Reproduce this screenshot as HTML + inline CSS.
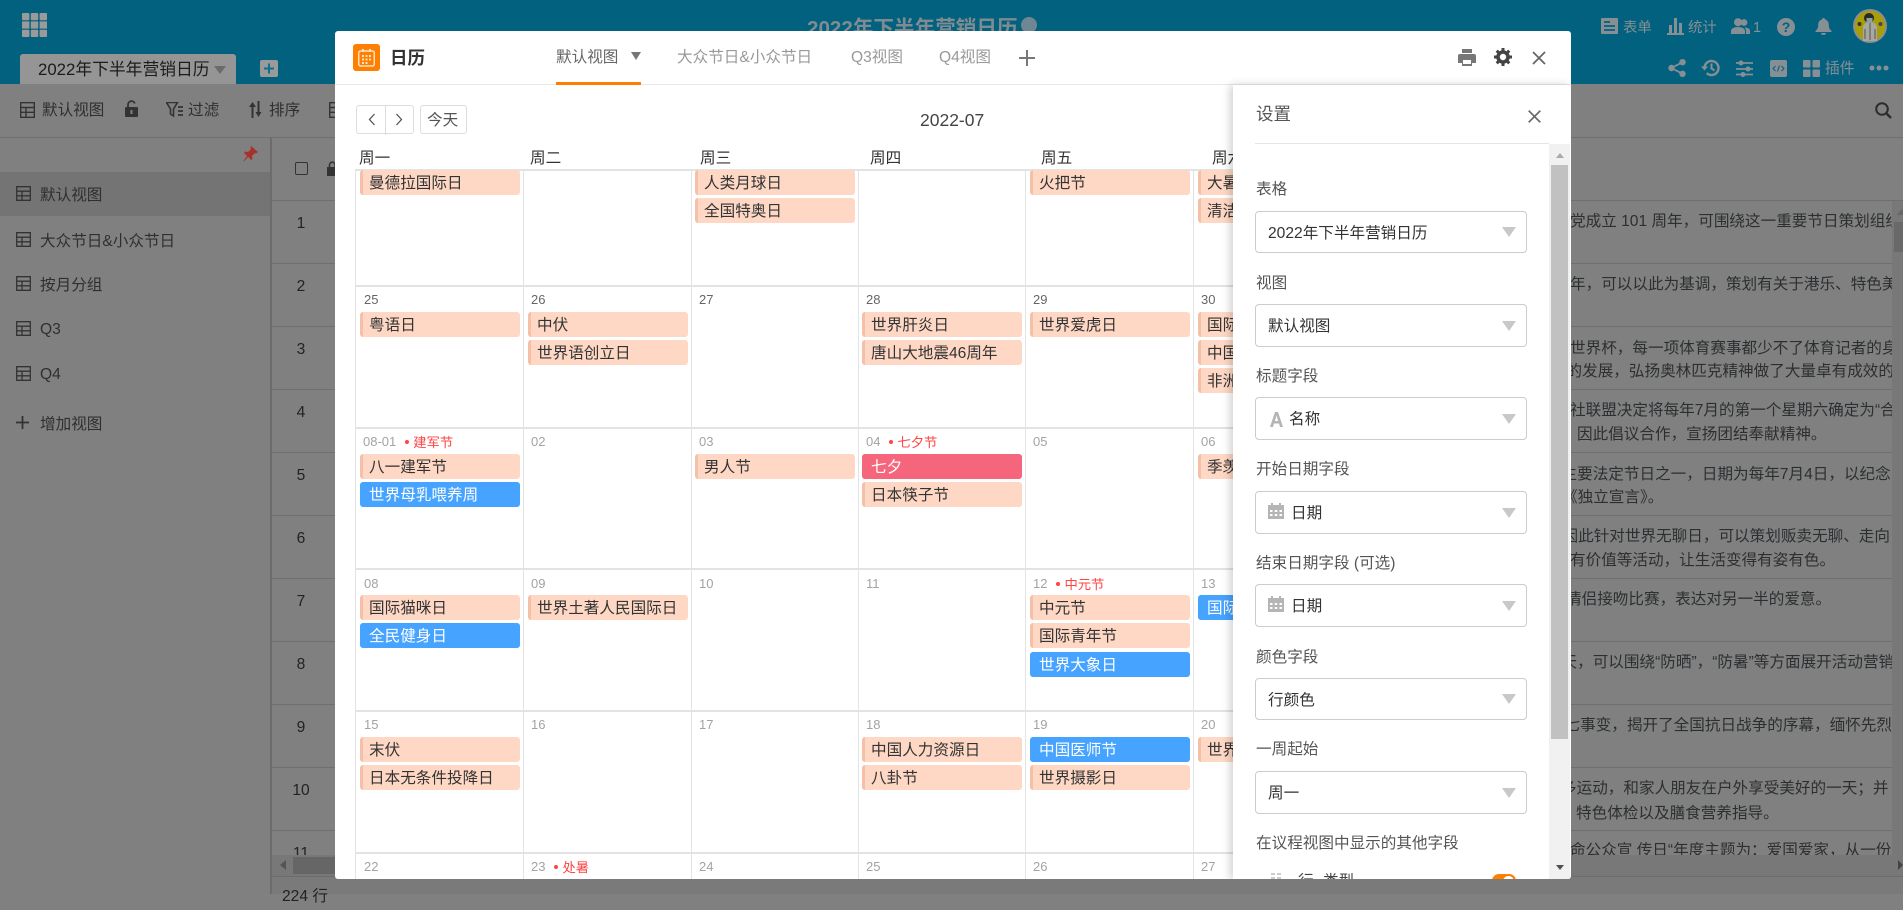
<!DOCTYPE html>
<html lang="zh"><head><meta charset="utf-8"><title>日历</title>
<style>
*{box-sizing:border-box}
html,body{margin:0;padding:0;width:1903px;height:894px;overflow:hidden;background:#808080;font-family:"Liberation Sans","Noto Sans CJK SC",sans-serif;font-size:15.6px;color:#333}
div,span,svg{position:absolute}
.t{white-space:nowrap;height:22px;line-height:26px}
.hl{height:1px;background:#6f6f6f}
.vl{width:1px;background:#e3e3e3;top:169px;height:710px}
.gh{height:2px;background:#e3e3e3;left:356px;width:880px}
.s{color:#2f2f2f}
.ti{color:#858f94;font-size:14.4px}
.n{color:#222;width:40px;text-align:center;left:281px}
.l{left:1571px;color:#2c2f31}
.e{width:160px;height:25px;line-height:28px;background:#fed8c4;border-left:3px solid #f5c0a8;border-radius:3px;padding-left:6px;color:#333;white-space:nowrap;overflow:hidden}
.b{background:#46a3ff;border-left-color:#46a3ff;color:#fff}
.r{background:#f5667c;border-left-color:#f5667c;color:#fff}
.d{font-size:13px;height:18px;line-height:20px;color:#a3a3a3;white-space:nowrap}
.d b{font-weight:normal}
.dk{color:#666}
.f{position:relative;top:1px;color:#f44;font-size:13.3px}
.f i{display:inline-block;width:4px;height:4px;border-radius:50%;background:#f44;margin:0 4px 3px 9px}
.wk{color:#333;top:146px}
.lb{left:1256px;color:#555}
.sel{left:1255px;width:272px;border:1px solid #ccc;border-radius:4px;background:#fff}
.sel .a{position:absolute;right:10px;top:50%;margin-top:-5px;width:0;height:0;border-left:7px solid transparent;border-right:7px solid transparent;border-top:10px solid #c8c8c8}
.sel .t{left:12px;top:9px;color:#333}
</style></head><body>

<!-- top app bar -->
<div style="left:0;top:0;width:1903px;height:84px;background:#02617f"></div>
<svg style="left:22px;top:13px" width="25" height="24" viewBox="0 0 25 24"><g fill="#9a9a9a"><rect x="0" y="0" width="7.4" height="7.2" rx="1"/><rect x="8.8" y="0" width="7.4" height="7.2" rx="1"/><rect x="17.6" y="0" width="7.4" height="7.2" rx="1"/><rect x="0" y="8.4" width="7.4" height="7.2"/><rect x="8.8" y="8.4" width="7.4" height="7.2"/><rect x="17.6" y="8.4" width="7.4" height="7.2"/><rect x="0" y="16.8" width="7.4" height="7.2" rx="1"/><rect x="8.8" y="16.8" width="7.4" height="7.2" rx="1"/><rect x="17.6" y="16.8" width="7.4" height="7.2" rx="1"/></g></svg>
<div style="left:20px;top:54px;width:216px;height:30px;background:#959595;border-radius:3px 3px 0 0"></div>
<div class="t" style="left:38px;top:57px;font-size:16.8px;color:#1c1c1c">2022年下半年营销日历</div>
<div style="left:214px;top:66px;width:0;height:0;border-left:6px solid transparent;border-right:6px solid transparent;border-top:8px solid #6b6b6b"></div>
<div style="left:260px;top:60px;width:18px;height:17px;background:#9a9a9a;border-radius:2px"></div>
<svg style="left:260px;top:60px" width="18" height="17"><path d="M9 3.500v10M4 8.500h10" stroke="#0f6f8f" stroke-width="2"/></svg>
<div class="t" style="left:807px;top:16px;font-size:20.6px;font-weight:bold;height:26px;line-height:26px;color:#7e8b91">2022年下半年营销日历</div>
<div style="left:1021px;top:17px;width:16px;height:16px;border-radius:50%;background:#6f8792"></div>

<!-- top-right icons -->
<svg style="left:1601px;top:18px" width="17" height="16" viewBox="0 0 17 16"><path d="M1 0h15a1 1 0 0 1 1 1v14a1 1 0 0 1-1 1H1a1 1 0 0 1-1-1V1a1 1 0 0 1 1-1z" fill="#858f94"/><path d="M3 4h6M3 8h11M3 12h11" stroke="#02617f" stroke-width="1.8"/></svg>
<div class="t ti" style="left:1623px;top:15px">表单</div>
<svg style="left:1667px;top:18px" width="17" height="17" viewBox="0 0 17 17"><path d="M0 15h17v2H0zM2 7h3v8H2zM7 0h3v15H7zM12 5h3v10h-3z" fill="#858f94"/></svg>
<div class="t ti" style="left:1688px;top:15px">统计</div>
<svg style="left:1731px;top:18px" width="19" height="16" viewBox="0 0 19 16"><circle cx="7" cy="4.2" r="4" fill="#858f94"/><circle cx="13" cy="4.5" r="3.4" fill="#858f94"/><path d="M0 16v-3c0-2.500 3-4 7-4s7 1.500 7 4v3z" fill="#858f94"/><path d="M15 16v-3.500c0-1.200-.5-2-1.500-3 3 0 5.500 1 5.500 3.500v3z" fill="#858f94"/></svg>
<div class="t ti" style="left:1753px;top:15px">1</div>
<svg style="left:1777px;top:18px" width="18" height="18" viewBox="0 0 18 18"><circle cx="9" cy="9" r="9" fill="#858f94"/><text x="9" y="14" text-anchor="middle" font-size="14" font-weight="bold" font-family="Liberation Sans" fill="#02617f">?</text></svg>
<svg style="left:1815px;top:18px" width="17" height="17" viewBox="0 0 17 17"><path d="M8.500 0c1 0 1.500.6 1.500 1.400 2.500.7 3.800 2.800 3.800 5.600 0 3 1 4.500 2.700 6v1H.5v-1c1.700-1.500 2.700-3 2.700-6 0-2.800 1.300-4.900 3.800-5.600C7 .6 7.500 0 8.500 0z" fill="#858f94"/><path d="M6 15h5c0 1.200-1 2-2.500 2S6 16.200 6 15z" fill="#858f94"/></svg>
<svg style="left:1853px;top:9px" width="34" height="34" viewBox="0 0 34 34"><circle cx="17" cy="17" r="17" fill="#8d8d8d"/><circle cx="17" cy="17" r="15" fill="#a89e08"/><path d="M10 32V18c0-3 4-5 7-5s7 2 7 5v14z" fill="#a8a8a0"/><circle cx="16" cy="9" r="5" fill="#2a2a2a"/><rect x="13.500" y="9" width="6" height="5" fill="#8fa1a1"/><circle cx="6.500" cy="15" r="2" fill="#333"/><circle cx="27.500" cy="15" r="2" fill="#445"/><path d="M17 14v17" stroke="#555"/><path d="M12 20v10M22 20v10" stroke="#555"/></svg>

<svg style="left:1668px;top:59px" width="18" height="18" viewBox="0 0 18 18"><g fill="#858f94"><circle cx="14.500" cy="3.200" r="3.200"/><circle cx="14.500" cy="14.800" r="3.200"/><circle cx="3.500" cy="9" r="3.200"/></g><path d="M14.500 3.200L3.500 9l11 5.800" stroke="#858f94" stroke-width="1.800" fill="none"/></svg>
<svg style="left:1701px;top:59px" width="19" height="18" viewBox="0 0 19 18"><path d="M3.500 9a7 7 0 1 1 2.200 5.100" fill="none" stroke="#858f94" stroke-width="2.400"/><path d="M0 7.500h7l-3.500 4z" fill="#858f94"/><path d="M10.500 4.500V9.500l3 2" fill="none" stroke="#858f94" stroke-width="2"/></svg>
<svg style="left:1736px;top:60px" width="17" height="17" viewBox="0 0 17 17"><path d="M0 3h17M0 9h17M0 14.500h17" stroke="#858f94" stroke-width="1.800"/><circle cx="5" cy="3" r="2.500" fill="#858f94"/><circle cx="12" cy="9" r="2.500" fill="#858f94"/><circle cx="7" cy="14.500" r="2.500" fill="#858f94"/></svg>
<div style="left:1770px;top:60px;width:17px;height:17px;border-radius:2px;background:#858f94"></div>
<svg style="left:1770px;top:60px" width="17" height="17" viewBox="0 0 17 17"><path d="M5.500 6L3 8.500 5.500 11M11.500 6L14 8.500 11.500 11M9.500 5.500L7.500 11.500" fill="none" stroke="#02617f" stroke-width="1"/></svg>
<svg style="left:1803px;top:60px" width="17" height="17" viewBox="0 0 17 17"><g fill="#858f94"><rect width="7.500" height="7.500" rx="1"/><rect x="9.500" width="7.500" height="7.500" rx="1"/><rect y="9.500" width="7.500" height="7.500" rx="1"/><rect x="9.500" y="9.500" width="7.500" height="7.500" rx="1"/></g></svg>
<div class="t ti" style="left:1825px;top:56px;font-size:14.8px">插件</div>
<svg style="left:1869px;top:65px" width="20" height="6"><g fill="#858f94"><circle cx="3" cy="3" r="2.500"/><circle cx="10" cy="3" r="2.500"/><circle cx="17" cy="3" r="2.500"/></g></svg>

<!-- toolbar -->
<div class="hl" style="left:0;top:137px;width:1903px"></div>
<svg style="left:20px;top:102px" width="15" height="16" viewBox="0 0 15 16"><path d="M.7.7h13.600v14.600H.7zM.7 5.500h13.600M.7 10.300h13.600M6 5.500v9.800" fill="none" stroke="#333" stroke-width="1.400"/></svg>
<div class="t s" style="left:42px;top:98px">默认视图</div>
<svg style="left:125px;top:100px" width="13" height="17" viewBox="0 0 13 17"><path d="M3 7V4.500a3.500 3.500 0 0 1 6.800-1" fill="none" stroke="#333" stroke-width="1.800"/><rect y="7" width="13" height="10" rx="1" fill="#333"/><rect x="5.500" y="10" width="2" height="4" fill="#808080"/></svg>
<svg style="left:166px;top:102px" width="17" height="15" viewBox="0 0 17 15"><path d="M.5.500h11L7.500 7v7l-3-2V7z" fill="none" stroke="#333" stroke-width="1.600"/><path d="M12 5h5M12 9h5M12 13h5" stroke="#333" stroke-width="1.800"/></svg>
<div class="t s" style="left:188px;top:98px">过滤</div>
<svg style="left:249px;top:101px" width="13" height="17" viewBox="0 0 13 17"><path d="M3.500 17V4M0 6l3.500-5L7 6z" fill="#333"/><path d="M9.500 0v13M6.500 11l3 5 3-5z" fill="#333"/><path d="M3.500 17V4M9.500 0v13" stroke="#333" stroke-width="2"/></svg>
<div class="t s" style="left:269px;top:98px">排序</div>
<svg style="left:329px;top:102px" width="15" height="16" viewBox="0 0 15 16"><path d="M.7.700h13.600v14.600H.7zM.7 5.500h13.600M.7 10.300h13.600" fill="none" stroke="#333" stroke-width="1.400"/></svg>
<svg style="left:1875px;top:102px" width="17" height="17" viewBox="0 0 17 17"><circle cx="7" cy="7" r="5.800" fill="none" stroke="#2c2c2c" stroke-width="2"/><path d="M11 11l5 5" stroke="#2c2c2c" stroke-width="2.400"/></svg>

<!-- sidebar -->
<div style="left:0;top:172px;width:270px;height:44px;background:#747474"></div>
<div style="left:270px;top:138px;width:2px;height:756px;background:#6c6c6c"></div>
<svg style="left:243px;top:146px" width="15" height="16" viewBox="0 0 15 16"><path d="M8 0l7 6-2 1.500-1-.5-3 3 .5 3-1.500 1-2.800-3.200L1 15.500l-.5-.5L4 10 1 7l1-1.500 3 .5 3-3-.5-1.200z" fill="#a7322a"/></svg>

<svg style="left:16px;top:186px" width="15" height="15" viewBox="0 0 15 15"><path d="M.7.700h13.600v13.600H.7zM.7 5.200h13.600M.7 9.800h13.600M6 5.200v9.100" fill="none" stroke="#333" stroke-width="1.300"/></svg>
<div class="t s" style="left:40px;top:183px">默认视图</div>
<svg style="left:16px;top:232px" width="15" height="15" viewBox="0 0 15 15"><path d="M.7.700h13.600v13.600H.7zM.7 5.200h13.600M.7 9.800h13.600M6 5.200v9.100" fill="none" stroke="#333" stroke-width="1.300"/></svg>
<div class="t s" style="left:40px;top:229px">大众节日&amp;小众节日</div>
<svg style="left:16px;top:276px" width="15" height="15" viewBox="0 0 15 15"><path d="M.7.700h13.600v13.600H.7zM.7 5.200h13.600M.7 9.800h13.600M6 5.200v9.100" fill="none" stroke="#333" stroke-width="1.300"/></svg>
<div class="t s" style="left:40px;top:273px">按月分组</div>
<svg style="left:16px;top:321px" width="15" height="15" viewBox="0 0 15 15"><path d="M.7.700h13.600v13.600H.7zM.7 5.200h13.600M.7 9.800h13.600M6 5.200v9.100" fill="none" stroke="#333" stroke-width="1.300"/></svg>
<div class="t s" style="left:40px;top:317px">Q3</div>
<svg style="left:16px;top:366px" width="15" height="15" viewBox="0 0 15 15"><path d="M.7.700h13.600v13.600H.7zM.7 5.200h13.600M.7 9.800h13.600M6 5.200v9.100" fill="none" stroke="#333" stroke-width="1.300"/></svg>
<div class="t s" style="left:40px;top:362px">Q4</div>
<svg style="left:16px;top:416px" width="13" height="13"><path d="M6.500 0v13M0 6.500h13" stroke="#333" stroke-width="1.800"/></svg>
<div class="t s" style="left:40px;top:412px">增加视图</div>

<!-- table left visible part -->
<div style="left:295px;top:162px;width:13px;height:13px;border:1.500px solid #333;border-radius:2px"></div>
<svg style="left:327px;top:161px" width="10" height="15" viewBox="0 0 10 15"><path d="M2.500 6V4a2.800 2.800 0 0 1 5.600 0v2" fill="none" stroke="#333" stroke-width="1.600"/><rect y="6" width="12" height="9" fill="#333"/></svg>
<div class="hl" style="left:272px;top:200px;width:63px"></div>
<div class="hl" style="left:272px;top:263px;width:63px"></div>
<div class="hl" style="left:272px;top:326px;width:63px"></div>
<div class="hl" style="left:272px;top:389px;width:63px"></div>
<div class="hl" style="left:272px;top:452px;width:63px"></div>
<div class="hl" style="left:272px;top:515px;width:63px"></div>
<div class="hl" style="left:272px;top:578px;width:63px"></div>
<div class="hl" style="left:272px;top:641px;width:63px"></div>
<div class="hl" style="left:272px;top:704px;width:63px"></div>
<div class="hl" style="left:272px;top:767px;width:63px"></div>
<div class="hl" style="left:272px;top:830px;width:63px"></div>
<div class="t n" style="top:211px">1</div>
<div class="t n" style="top:274px">2</div>
<div class="t n" style="top:337px">3</div>
<div class="t n" style="top:400px">4</div>
<div class="t n" style="top:463px">5</div>
<div class="t n" style="top:526px">6</div>
<div class="t n" style="top:589px">7</div>
<div class="t n" style="top:652px">8</div>
<div class="t n" style="top:715px">9</div>
<div class="t n" style="top:778px">10</div>
<div class="t n" style="top:841px">11</div>

<!-- table right visible part -->
<div style="left:1892px;top:200px;width:11px;height:655px;background:#787878"></div>
<div style="left:1894px;top:222px;width:9px;height:30px;background:#696969"></div>
<div style="left:1897px;top:209px;width:0;height:0;border-left:5px solid transparent;border-right:5px solid transparent;border-bottom:6px solid #666"></div>
<div class="hl" style="left:1571px;top:200px;width:332px"></div>
<div class="hl" style="left:1571px;top:263px;width:321px"></div>
<div class="hl" style="left:1571px;top:326px;width:321px"></div>
<div class="hl" style="left:1571px;top:389px;width:321px"></div>
<div class="hl" style="left:1571px;top:452px;width:321px"></div>
<div class="hl" style="left:1571px;top:515px;width:321px"></div>
<div class="hl" style="left:1571px;top:578px;width:321px"></div>
<div class="hl" style="left:1571px;top:641px;width:321px"></div>
<div class="hl" style="left:1571px;top:704px;width:321px"></div>
<div class="hl" style="left:1571px;top:767px;width:321px"></div>
<div class="hl" style="left:1571px;top:830px;width:321px"></div>
<div style="left:0;top:0;width:1903px;height:894px;clip-path:inset(200px 11px 39px 1571px)">
<div class="t l" style="top:209px;left:1570px">党成立 101 周年，可围绕这一重要节日策划组织</div>
<div class="t l" style="top:272px;left:1570px">年，可以以此为基调，策划有关于港乐、特色美</div>
<div class="t l" style="top:336px;left:1570px">世界杯，每一项体育赛事都少不了体育记者的身影</div>
<div class="t l" style="top:359px;left:1566.500px">的发展，弘扬奥林匹克精神做了大量卓有成效的工</div>
<div class="t l" style="top:398px;left:1570px">社联盟决定将每年7月的第一个星期六确定为“合</div>
<div class="t l" style="top:422px;left:1577px">因此倡议合作，宣扬团结奉献精神。</div>
<div class="t l" style="top:462px;left:1561.500px">主要法定节日之一，日期为每年7月4日，以纪念</div>
<div class="t l" style="top:485px;left:1562px">《独立宣言》。</div>
<div class="t l" style="top:524px;left:1562.500px">因此针对世界无聊日，可以策划贩卖无聊、走向</div>
<div class="t l" style="top:548px;left:1570px">有价值等活动，让生活变得有姿有色。</div>
<div class="t l" style="top:587px;left:1566px">情侣接吻比赛，表达对另一半的爱意。</div>
<div class="t l" style="top:650px;left:1561.500px">天，可以围绕“防晒”，“防暑”等方面展开活动营销</div>
<div class="t l" style="top:713px;left:1564.500px">七事变，揭开了全国抗日战争的序幕，缅怀先烈</div>
<div class="t l" style="top:776px;left:1561px">多运动，和家人朋友在户外享受美好的一天；并</div>
<div class="t l" style="top:801px;left:1576px">特色体检以及膳食营养指导。</div>
<div class="t l" style="top:838px;left:1570px">命公众宣 传日“年度主题为：爱国爱家，从一份</div>
</div>

<!-- h scrollbar + footer -->
<div style="left:272px;top:855px;width:1631px;height:21px;background:#787878"></div>
<div style="left:293px;top:857px;width:60px;height:17px;background:#666"></div>
<div style="left:280px;top:860px;width:0;height:0;border-top:5px solid transparent;border-bottom:5px solid transparent;border-right:6px solid #555"></div>
<div style="left:1898px;top:860px;width:0;height:0;border-top:5px solid transparent;border-bottom:5px solid transparent;border-left:5px solid #444"></div>
<div style="left:272px;top:876px;width:1631px;height:18px;background:#7a7a7a;border-top:1px solid #6c6c6c"></div>
<div class="t" style="left:282px;top:884px;color:#222">224 行</div>

<!-- MODAL LAYER -->
<div style="left:0;top:0;width:1903px;height:894px;clip-path:inset(31px 332px 15px 335px round 3px);background:#fff">

<!-- header -->
<div style="left:335px;top:84px;width:1236px;height:1px;background:#e8e8e8"></div>
<div style="left:353px;top:44px;width:27px;height:27px;border-radius:3px;background:#ff8000"></div>
<svg style="left:358px;top:49px" width="17" height="18" viewBox="0 0 17 18"><rect x=".7" y="2" width="15.600" height="15" rx="2" fill="none" stroke="#ffe2c4" stroke-width="1.500"/><g fill="#ffe2c4"><rect x="4" y="0" width="2" height="3"/><rect x="11" y="0" width="2" height="3"/><rect x="4" y="6" width="2" height="2"/><rect x="7.500" y="6" width="2" height="2"/><rect x="11" y="6" width="2" height="2"/><rect x="4" y="9.500" width="2" height="2"/><rect x="7.500" y="9.500" width="2" height="2"/><rect x="11" y="9.500" width="2" height="2"/><rect x="4" y="13" width="2" height="2"/><rect x="7.500" y="13" width="2" height="2"/></g></svg>
<div class="t" style="left:390px;top:45px;font-size:17.500px;font-weight:bold;color:#333">日历</div>
<div class="t" style="left:556px;top:45px;color:#666">默认视图</div>
<div style="left:631px;top:52px;width:0;height:0;border-left:5.500px solid transparent;border-right:5.500px solid transparent;border-top:8px solid #777"></div>
<div style="left:556px;top:82px;width:85px;height:2.500px;background:#ff7f00"></div>
<div class="t" style="left:677px;top:45px;color:#999">大众节日&amp;小众节日</div>
<div class="t" style="left:851px;top:45px;color:#999">Q3视图</div>
<div class="t" style="left:939px;top:45px;color:#999">Q4视图</div>
<svg style="left:1019px;top:50px" width="16" height="16"><path d="M8 0v16M0 8h16" stroke="#777" stroke-width="2"/></svg>
<svg style="left:1458px;top:49px" width="18" height="17" viewBox="0 0 18 17"><path d="M4 0h10v4H4z" fill="#777"/><path d="M2 5h14a2 2 0 0 1 2 2v7h-4v3H4v-3H0V7a2 2 0 0 1 2-2z" fill="#777"/><rect x="5" y="11" width="8" height="4" fill="#fff"/></svg>
<svg style="left:1494px;top:48px" width="18" height="18" viewBox="0 0 18 18"><circle cx="9" cy="9" r="5" fill="none" stroke="#444" stroke-width="3.600"/><g stroke="#444" stroke-width="3"><path d="M9 0v3.500M9 14.500V18M0 9h3.500M14.500 9H18M2.700 2.700l2.400 2.400M12.900 12.900l2.400 2.400M15.300 2.700l-2.400 2.400M5.100 12.900l-2.400 2.400"/></g></svg>
<svg style="left:1532px;top:51px" width="14" height="14"><path d="M1 1l12 12M13 1L1 13" stroke="#666" stroke-width="1.800"/></svg>

<!-- nav -->
<div style="left:356px;top:105px;width:58px;height:29px;border:1px solid #ddd;border-radius:3px"></div>
<div style="left:385px;top:105px;width:1px;height:30px;background:#ddd"></div>
<svg style="left:368px;top:113px" width="8" height="13"><path d="M6.500 1L1.500 6.500l5 5.500" fill="none" stroke="#555" stroke-width="1.300"/></svg>
<svg style="left:395px;top:113px" width="8" height="13"><path d="M1.500 1l5 5.500-5 5.500" fill="none" stroke="#555" stroke-width="1.300"/></svg>
<div style="left:420px;top:105px;width:47px;height:29px;border:1px solid #ddd;border-radius:3px"></div>
<div class="t" style="left:427px;top:108px;color:#555">今天</div>
<div class="t" style="left:920px;top:107px;font-size:17.500px;color:#444">2022-07</div>

<!-- week headers -->
<div class="t wk" style="left:359px">周一</div>
<div class="t wk" style="left:530px">周二</div>
<div class="t wk" style="left:700px">周三</div>
<div class="t wk" style="left:870px">周四</div>
<div class="t wk" style="left:1041px">周五</div>
<div class="t wk" style="left:1212px">周六</div>

<!-- grid -->
<div class="gh" style="top:169px"></div>
<div class="gh" style="top:285px"></div>
<div class="gh" style="top:427px"></div>
<div class="gh" style="top:568px"></div>
<div class="gh" style="top:710px"></div>
<div class="gh" style="top:852px"></div>
<div class="vl" style="left:355px"></div>
<div class="vl" style="left:523px"></div>
<div class="vl" style="left:691px"></div>
<div class="vl" style="left:858px"></div>
<div class="vl" style="left:1025px"></div>
<div class="vl" style="left:1193px"></div>

<!-- row 0 -->
<div class="e" style="left:360px;top:170px">曼德拉国际日</div>
<div class="e" style="left:695px;top:170px">人类月球日</div>
<div class="e" style="left:695px;top:198px">全国特奥日</div>
<div class="e" style="left:1030px;top:170px">火把节</div>
<div class="e" style="left:1198px;top:170px">大暑</div>
<div class="e" style="left:1198px;top:198px">清洁日</div>
<!-- row 1 -->
<div class="d dk" style="left:364px;top:290px">25</div>
<div class="d dk" style="left:531px;top:290px">26</div>
<div class="d dk" style="left:699px;top:290px">27</div>
<div class="d dk" style="left:866px;top:290px">28</div>
<div class="d dk" style="left:1033px;top:290px">29</div>
<div class="d dk" style="left:1201px;top:290px">30</div>
<div class="e" style="left:360px;top:312px">粤语日</div>
<div class="e" style="left:528px;top:312px">中伏</div>
<div class="e" style="left:528px;top:340px">世界语创立日</div>
<div class="e" style="left:862px;top:312px">世界肝炎日</div>
<div class="e" style="left:862px;top:340px">唐山大地震46周年</div>
<div class="e" style="left:1030px;top:312px">世界爱虎日</div>
<div class="e" style="left:1198px;top:312px">国际友谊日</div>
<div class="e" style="left:1198px;top:340px">中国航天日</div>
<div class="e" style="left:1198px;top:368px">非洲妇女日</div>
<!-- row 2 -->
<div class="d" style="left:363px;top:432px"><b>08-01</b><span class="f"><i></i>建军节</span></div>
<div class="d" style="left:531px;top:432px">02</div>
<div class="d" style="left:699px;top:432px">03</div>
<div class="d" style="left:866px;top:432px"><b>04</b><span class="f"><i></i>七夕节</span></div>
<div class="d" style="left:1033px;top:432px">05</div>
<div class="d" style="left:1201px;top:432px">06</div>
<div class="e" style="left:360px;top:454px">八一建军节</div>
<div class="e b" style="left:360px;top:482px">世界母乳喂养周</div>
<div class="e" style="left:695px;top:454px">男人节</div>
<div class="e r" style="left:862px;top:454px">七夕</div>
<div class="e" style="left:862px;top:482px">日本筷子节</div>
<div class="e" style="left:1198px;top:454px">季羡林诞辰</div>
<!-- row 3 -->
<div class="d" style="left:364px;top:574px">08</div>
<div class="d" style="left:531px;top:574px">09</div>
<div class="d" style="left:699px;top:574px">10</div>
<div class="d" style="left:866px;top:574px">11</div>
<div class="d" style="left:1033px;top:574px"><b>12</b><span class="f"><i></i>中元节</span></div>
<div class="d" style="left:1201px;top:574px">13</div>
<div class="e" style="left:360px;top:595px">国际猫咪日</div>
<div class="e b" style="left:360px;top:623px">全民健身日</div>
<div class="e" style="left:528px;top:595px">世界土著人民国际日</div>
<div class="e" style="left:1030px;top:595px">中元节</div>
<div class="e" style="left:1030px;top:623px">国际青年节</div>
<div class="e b" style="left:1030px;top:652px">世界大象日</div>
<div class="e b" style="left:1198px;top:595px">国际左撇子日</div>
<!-- row 4 -->
<div class="d" style="left:364px;top:715px">15</div>
<div class="d" style="left:531px;top:715px">16</div>
<div class="d" style="left:699px;top:715px">17</div>
<div class="d" style="left:866px;top:715px">18</div>
<div class="d" style="left:1033px;top:715px">19</div>
<div class="d" style="left:1201px;top:715px">20</div>
<div class="e" style="left:360px;top:737px">末伏</div>
<div class="e" style="left:360px;top:765px">日本无条件投降日</div>
<div class="e" style="left:862px;top:737px">中国人力资源日</div>
<div class="e" style="left:862px;top:765px">八卦节</div>
<div class="e b" style="left:1030px;top:737px">中国医师节</div>
<div class="e" style="left:1030px;top:765px">世界摄影日</div>
<div class="e" style="left:1198px;top:737px">世界蚊子日</div>
<!-- row 5 -->
<div class="d" style="left:364px;top:857px">22</div>
<div class="d" style="left:531px;top:857px"><b>23</b><span class="f"><i></i>处暑</span></div>
<div class="d" style="left:699px;top:857px">24</div>
<div class="d" style="left:866px;top:857px">25</div>
<div class="d" style="left:1033px;top:857px">26</div>
<div class="d" style="left:1201px;top:857px">27</div>

<!-- settings panel -->
<div style="left:1233px;top:85px;width:338px;height:794px;background:#fff;box-shadow:-3px 0 8px rgba(0,0,0,.18)"></div>
<div class="t" style="left:1256px;top:101px;font-size:17.500px;color:#555">设置</div>
<svg style="left:1528px;top:110px" width="13" height="13"><path d="M.7.700l11.600 11.600M12.300.700L.7 12.300" stroke="#666" stroke-width="1.700"/></svg>
<div style="left:1255px;top:143px;width:294px;height:1px;background:#e5e5e5"></div>
<!-- scrollbar -->
<div style="left:1549px;top:144px;width:21px;height:735px;background:#f1f1f1"></div>
<div style="left:1551px;top:165px;width:17px;height:574px;background:#c1c1c1"></div>
<div style="left:1556px;top:153px;width:0;height:0;border-left:4.500px solid transparent;border-right:4.500px solid transparent;border-bottom:5px solid #aaa"></div>
<div style="left:1556px;top:865px;width:0;height:0;border-left:4.500px solid transparent;border-right:4.500px solid transparent;border-top:5px solid #505050"></div>

<div class="t lb" style="top:177px">表格</div>
<div class="sel" style="top:211px;height:42px"><div class="t" style="top:9px">2022年下半年营销日历</div><div class="a"></div></div>
<div class="t lb" style="top:271px">视图</div>
<div class="sel" style="top:304px;height:43px"><div class="t">默认视图</div><div class="a"></div></div>
<div class="t lb" style="top:364px">标题字段</div>
<div class="sel" style="top:397px;height:43px"><svg style="left:13px;top:14px" width="15" height="15" viewBox="0 0 15 15"><path d="M1 15L6 0h3l5 15h-3l-1-3.500H5L4 15zM5.800 9h3.400L7.500 3.500z" fill="#b5b5b5"/></svg><div class="t" style="left:33px">名称</div><div class="a"></div></div>
<div class="t lb" style="top:457px">开始日期字段</div>
<div class="sel" style="top:491px;height:43px"><svg style="left:12px;top:11px" width="16" height="16" viewBox="0 0 16 16"><path d="M3 0h2v2h6V0h2v2h3v14H0V2h3z" fill="#b5b5b5"/><g fill="#fff"><rect x="2" y="7" width="2.500" height="2"/><rect x="6.700" y="7" width="2.500" height="2"/><rect x="11.500" y="7" width="2.500" height="2"/><rect x="2" y="11" width="2.500" height="2"/><rect x="6.700" y="11" width="2.500" height="2"/><rect x="11.500" y="11" width="2.500" height="2"/></g></svg><div class="t" style="left:35px">日期</div><div class="a"></div></div>
<div class="t lb" style="top:551px">结束日期字段 (可选)</div>
<div class="sel" style="top:584px;height:43px"><svg style="left:12px;top:11px" width="16" height="16" viewBox="0 0 16 16"><path d="M3 0h2v2h6V0h2v2h3v14H0V2h3z" fill="#b5b5b5"/><g fill="#fff"><rect x="2" y="7" width="2.500" height="2"/><rect x="6.700" y="7" width="2.500" height="2"/><rect x="11.500" y="7" width="2.500" height="2"/><rect x="2" y="11" width="2.500" height="2"/><rect x="6.700" y="11" width="2.500" height="2"/><rect x="11.500" y="11" width="2.500" height="2"/></g></svg><div class="t" style="left:35px">日期</div><div class="a"></div></div>
<div class="t lb" style="top:645px">颜色字段</div>
<div class="sel" style="top:678px;height:42px"><div class="t">行颜色</div><div class="a"></div></div>
<div class="t lb" style="top:737px">一周起始</div>
<div class="sel" style="top:771px;height:43px"><div class="t">周一</div><div class="a"></div></div>
<div class="t lb" style="top:831px">在议程视图中显示的其他字段</div>
<svg style="left:1271px;top:873px" width="10" height="12"><g fill="#ccc"><rect width="4" height="2"/><rect x="6" width="4" height="2"/><rect y="4" width="4" height="2"/><rect x="6" y="4" width="4" height="2"/></g></svg>
<div class="t" style="left:1298px;top:869px;color:#444">行</div>
<div class="t" style="left:1323px;top:869px;color:#444">类型</div>
<div style="left:1492px;top:874px;width:24px;height:14px;border-radius:7px;background:#ff8000"></div>
<div style="left:1503px;top:876px;width:11px;height:11px;border-radius:50%;background:#fff"></div>
</div>

</body></html>
